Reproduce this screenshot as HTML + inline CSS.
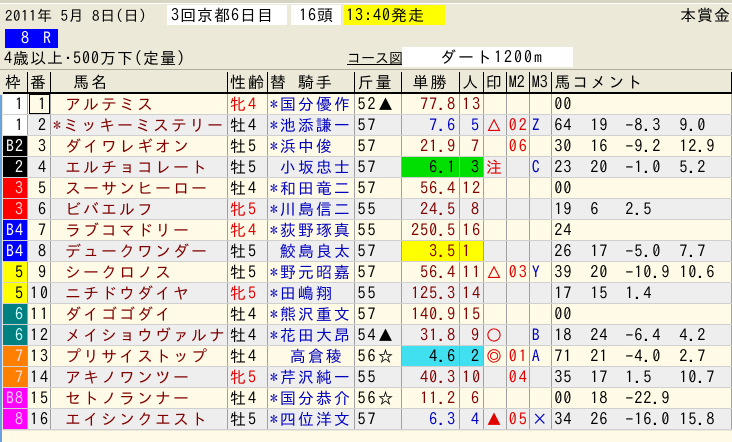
<!DOCTYPE html>
<html><head><meta charset="utf-8"><style>
body{margin:0;width:732px;height:442px;background:#ece9d8;position:relative;overflow:hidden;font-family:"IPAGothic","Liberation Sans","Noto Sans CJK JP",sans-serif;font-size:16px;color:#000}
.a{position:absolute;white-space:nowrap;line-height:20px;letter-spacing:1px}
.box{background:#fff}
table{position:absolute;left:3px;top:72px;border-collapse:collapse;table-layout:fixed;letter-spacing:2px}
td{height:20px;padding:0 0 0 2px;border-right:1px solid #a0a0a0;border-bottom:1px solid #d0d0d0;white-space:nowrap;overflow:hidden;line-height:20px}
td.r{padding:0 3px 0 0;letter-spacing:1px}
tr.h td{background:#ece9d8;border-bottom:2px solid #000;border-right:1px solid #000}
tr.o td{background:#fffbe6}
tr.e td{background:#eeeeee}
.r{text-align:right}.n{color:#800000}.b{color:#0000c0}.red{color:#e00000}
.c{letter-spacing:1px}
.c span{display:inline-block}
.c span:nth-child(1){width:36px}.c span:nth-child(2){width:35px}.c span:nth-child(3){width:54px}
</style></head><body>
<div style="position:absolute;left:0;top:0;width:732px;height:3px;background:#d8d4c4;border-bottom:1px solid #fff"></div>
<div class="a" style="left:5px;top:6px;font-size:15px;letter-spacing:0.5px">2011年 5月 8日(日)</div>
<div class="a box" style="left:167px;top:5px;width:120px;padding-left:4px;box-sizing:border-box">3回京都6日目</div>
<div class="a box" style="left:291px;top:5px;width:50px;padding-left:8px;box-sizing:border-box">16頭</div>
<div class="a" style="left:344px;top:5px;width:101px;background:#ffff00;padding-left:2px;box-sizing:border-box">13:40発走</div>
<div class="a" style="left:680px;top:5px">本賞金 [</div>
<div class="a" style="left:5px;top:29px;width:53px;height:19px;background:#0000ff;color:#fff;padding-left:16px;box-sizing:border-box;line-height:19px;letter-spacing:3px">8 R</div>
<div class="a" style="left:4px;top:48px">4歳以上･500万下(定量)</div>
<div class="a" style="left:347px;top:48px;text-decoration:underline;font-size:14px;letter-spacing:0">コース図</div>
<div class="a box" style="left:402px;top:47px;width:171px;padding-left:38px;box-sizing:border-box;letter-spacing:2px">ダート1200m</div>
<div style="position:absolute;left:0;top:69px;width:732px;height:1px;background:#b0ad9e"></div>
<div style="position:absolute;left:0;top:95px;width:2px;height:347px;background:#6aa0e0"></div>
<table>
<colgroup><col style="width:25px"><col style="width:22px"><col style="width:177px"><col style="width:40px"><col style="width:88px"><col style="width:48px"><col style="width:59px"><col style="width:24px"><col style="width:23px"><col style="width:22px"><col style="width:23px"><col style="width:182px"></colgroup>
<tr class="h"><td>枠</td><td>番</td><td style="padding-left:22px">馬名</td><td>性齢</td><td>替 騎手</td><td>斤量</td><td style="padding-left:10px">単勝</td><td>人</td><td>印</td><td style="letter-spacing:0">M2</td><td style="letter-spacing:0">M3</td><td>馬コメント</td></tr>
<tr class="o"><td class="r" style="background:#fff">1</td><td class="r" style="outline:1px solid #000;outline-offset:-2px">1</td><td class="n" style="padding-left:14px">アルテミス</td><td class="red">牝4</td><td class="b">*国分優作</td><td>52▲</td><td class="r n">77.8</td><td class="n">13</td><td></td><td></td><td></td><td class="c">00</td></tr>
<tr class="e"><td class="r" style="background:#fff">1</td><td class="r">2</td><td class="n">*ミッキーミステリー</td><td>牡4</td><td class="b">*池添謙一</td><td>57</td><td class="r b">7.6</td><td class="r b">5</td><td class="red">△</td><td class="red">02</td><td class="b">Z</td><td class="c"><span>64</span><span>19</span><span>-8.3</span>9.0</td></tr>
<tr class="o"><td class="r" style="background:#000;color:#fff">B2</td><td class="r">3</td><td class="n" style="padding-left:14px">ダイワレギオン</td><td>牡5</td><td class="b">*浜中俊</td><td>57</td><td class="r n">21.9</td><td class="r n">7</td><td></td><td class="red">06</td><td></td><td class="c"><span>30</span><span>16</span><span>-9.2</span>12.9</td></tr>
<tr class="e"><td class="r" style="background:#000;color:#fff">2</td><td class="r">4</td><td class="n" style="padding-left:14px">エルチョコレート</td><td>牡5</td><td class="b">&nbsp;小坂忠士</td><td>57</td><td class="r" style="background:#00e000">6.1</td><td class="r" style="background:#00e000">3</td><td class="red">注</td><td></td><td class="b">C</td><td class="c"><span>23</span><span>20</span><span>-1.0</span>5.2</td></tr>
<tr class="o"><td class="r" style="background:#ff0000;color:#fcc">3</td><td class="r">5</td><td class="n" style="padding-left:14px">スーサンヒーロー</td><td>牡4</td><td class="b">*和田竜二</td><td>57</td><td class="r n">56.4</td><td class="n">12</td><td></td><td></td><td></td><td class="c">00</td></tr>
<tr class="e"><td class="r" style="background:#ff0000;color:#fcc">3</td><td class="r">6</td><td class="n" style="padding-left:14px">ビバエルフ</td><td class="red">牝5</td><td class="b">*川島信二</td><td>55</td><td class="r n">24.5</td><td class="r n">8</td><td></td><td></td><td></td><td class="c"><span>19</span><span>6</span>2.5</td></tr>
<tr class="o"><td class="r" style="background:#0000ff;color:#fff">B4</td><td class="r">7</td><td class="n" style="padding-left:14px">ラブコマドリー</td><td class="red">牝4</td><td class="b">*荻野琢真</td><td>55</td><td class="r n">250.5</td><td class="n">16</td><td></td><td></td><td></td><td class="c">24</td></tr>
<tr class="e"><td class="r" style="background:#0000ff;color:#fff">B4</td><td class="r">8</td><td class="n" style="padding-left:14px">デュークワンダー</td><td>牡5</td><td class="b">&nbsp;鮫島良太</td><td>57</td><td class="r n" style="background:#ffff00">3.5</td><td class="n" style="background:#ffff00">1</td><td></td><td></td><td></td><td class="c"><span>26</span><span>17</span><span>-5.0</span>7.7</td></tr>
<tr class="o"><td class="r" style="background:#ffff00">5</td><td class="r">9</td><td class="n" style="padding-left:14px">シークロノス</td><td>牡5</td><td class="b">*野元昭嘉</td><td>57</td><td class="r n">56.4</td><td class="n">11</td><td class="red">△</td><td class="red">03</td><td class="b">Y</td><td class="c"><span>39</span><span>20</span><span>-10.9</span>10.6</td></tr>
<tr class="e"><td class="r" style="background:#ffff00">5</td><td>10</td><td class="n" style="padding-left:14px">ニチドウダイヤ</td><td class="red">牝5</td><td class="b">*田嶋翔</td><td>55</td><td class="r n">125.3</td><td class="n">14</td><td></td><td></td><td></td><td class="c"><span>17</span><span>15</span>1.4</td></tr>
<tr class="o"><td class="r" style="background:#008080;color:#cff">6</td><td>11</td><td class="n" style="padding-left:14px">ダイゴゴダイ</td><td>牡4</td><td class="b">*熊沢重文</td><td>57</td><td class="r n">140.9</td><td class="n">15</td><td></td><td></td><td></td><td class="c">00</td></tr>
<tr class="e"><td class="r" style="background:#008080;color:#cff">6</td><td>12</td><td class="n" style="padding-left:14px">メイショウヴァルナ</td><td>牡4</td><td class="b">*花田大昂</td><td>54▲</td><td class="r n">31.8</td><td class="r n">9</td><td class="red">○</td><td></td><td class="b">B</td><td class="c"><span>18</span><span>24</span><span>-6.4</span>4.2</td></tr>
<tr class="o"><td class="r" style="background:#ff8000;color:#fdd">7</td><td>13</td><td class="n" style="padding-left:14px">プリサイストップ</td><td>牡4</td><td class="b">&nbsp;&nbsp;高倉稜</td><td>56☆</td><td class="r" style="background:#40e0f0">4.6</td><td class="r" style="background:#40e0f0">2</td><td class="red">◎</td><td class="red">01</td><td class="b">A</td><td class="c"><span>71</span><span>21</span><span>-4.0</span>2.7</td></tr>
<tr class="e"><td class="r" style="background:#ff8000;color:#fdd">7</td><td>14</td><td class="n" style="padding-left:14px">アキノワンツー</td><td class="red">牝5</td><td class="b">*芹沢純一</td><td>55</td><td class="r n">40.3</td><td class="n">10</td><td></td><td class="red">04</td><td></td><td class="c"><span>35</span><span>17</span><span>1.5</span>10.7</td></tr>
<tr class="o"><td class="r" style="background:#ff00ff;color:#fcf">B8</td><td>15</td><td class="n" style="padding-left:14px">セトノランナー</td><td>牡4</td><td class="b">*国分恭介</td><td>56☆</td><td class="r n">11.2</td><td class="r n">6</td><td></td><td></td><td></td><td class="c"><span>00</span><span>18</span>-22.9</td></tr>
<tr class="e"><td class="r" style="background:#ff00ff;color:#fcf">8</td><td>16</td><td class="n" style="padding-left:14px">エイシンクエスト</td><td>牡5</td><td class="b">*四位洋文</td><td>57</td><td class="r b">6.3</td><td class="r b">4</td><td class="red">▲</td><td class="red">05</td><td class="b">×</td><td class="c"><span>34</span><span>26</span><span>-16.0</span>15.8</td></tr>
</table>
<div style="position:absolute;left:2px;top:431px;width:730px;height:11px;background:#fffbe6"></div>
</body></html>
